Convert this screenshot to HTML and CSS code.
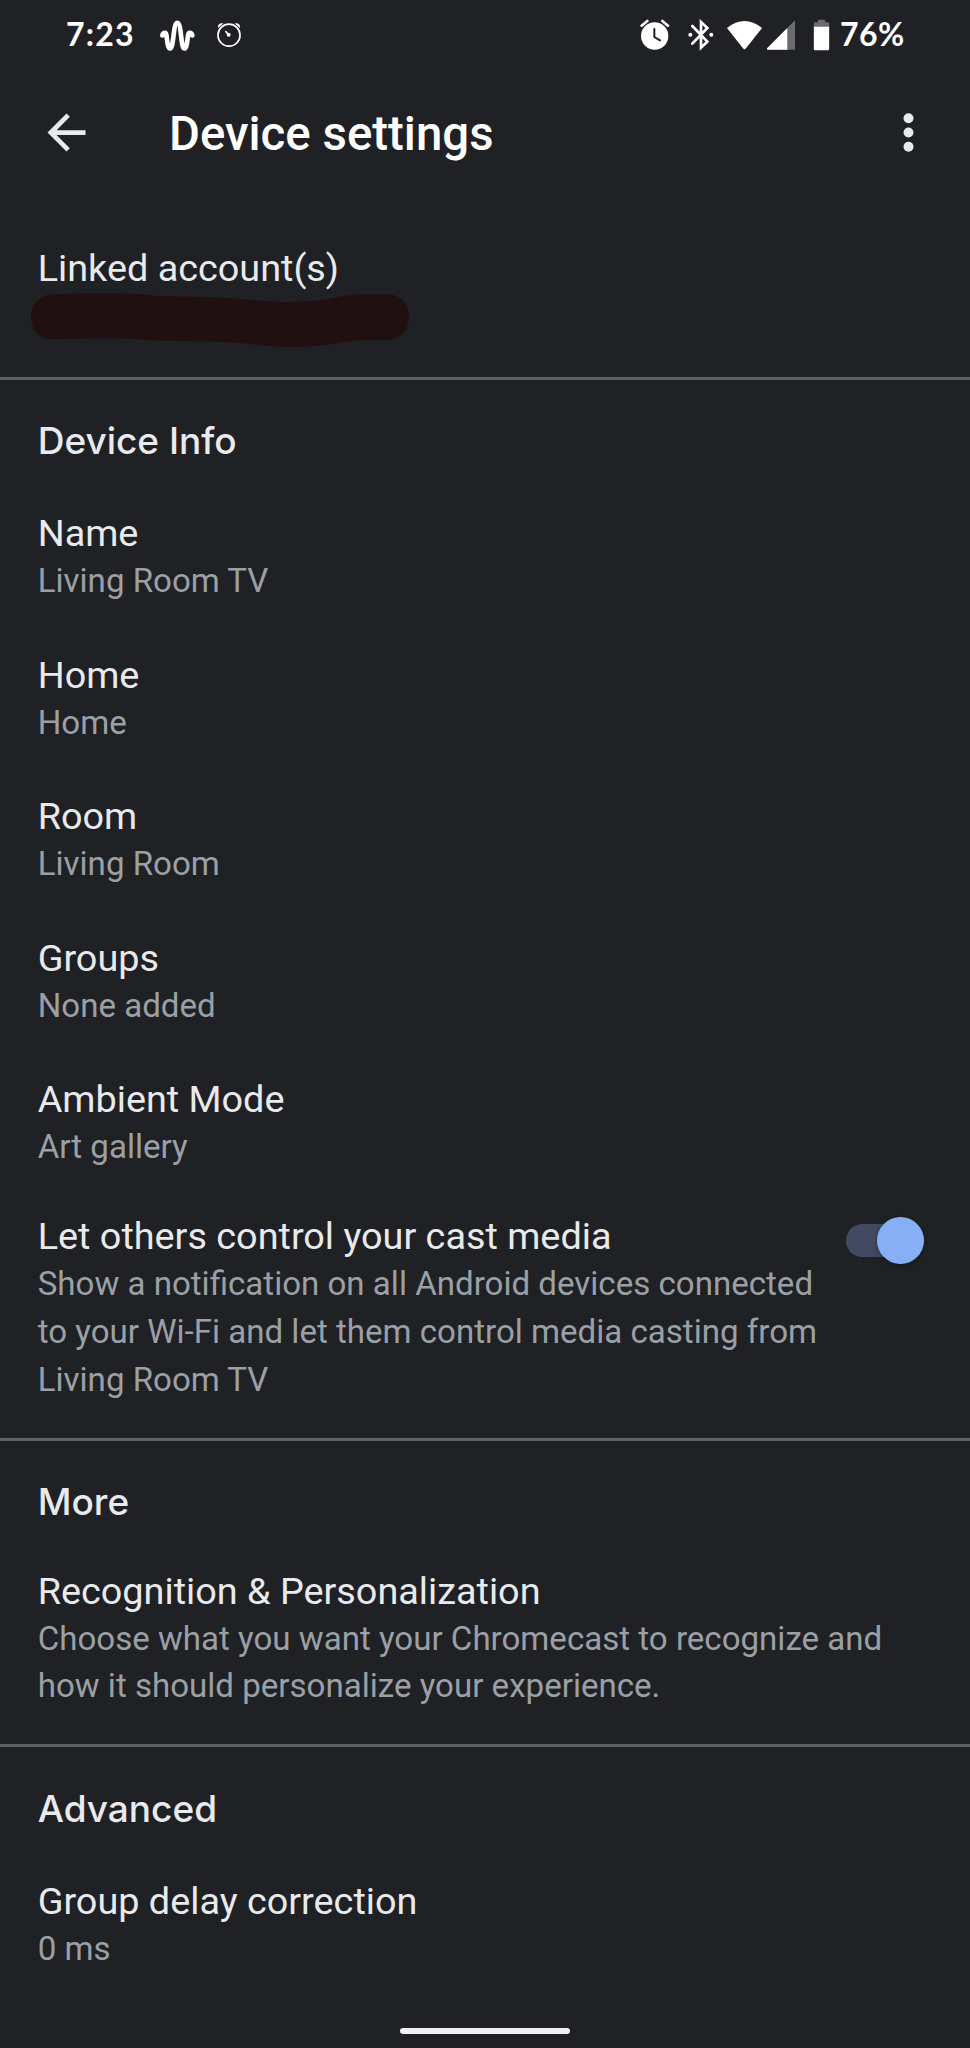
FILE: index.html
```html
<!DOCTYPE html>
<html lang="en">

<head>
  <meta charset="UTF-8">
  <meta name="viewport" content="width=device-width, initial-scale=1.0">
  <title>Device settings</title>
  <link rel="stylesheet" href="styles.css">
</head>

<body>
  <div class="status-bar">
    <span class="time">7:23</span>
    <svg class="icon-wave" viewBox="358 56 108 98">
      <path d="M368 105 Q369 97 377 97 C383 97 381 144 391 144 C403 144 400 67 413 67 C426 67 423 144 434 144 C445 144 442 97 449 97 Q457 97 458 105" fill="none" stroke="#fff" stroke-width="14" stroke-linecap="round" stroke-linejoin="round"/>
    </svg>
    <svg class="icon-timer" viewBox="527 62 78 82">
      <circle cx="566" cy="105" r="33.500" fill="none" stroke="#fff" stroke-width="5"/>
      <path d="M533 83 Q530 67 549 69 Z M599 83 Q602 67 583 69 Z" fill="#fff"/>
      <circle cx="565" cy="104" r="6" fill="#fff"/>
      <path d="M565 104 L556 94" stroke="#fff" stroke-width="5" stroke-linecap="round"/>
    </svg>
    <div class="spacer"></div>
    <svg class="icon-alarm" viewBox="60 56 90 96">
      <circle cx="104" cy="107" r="41" fill="#fff"/>
      <path d="M65 76 L82 62 M127 62 L144 76" stroke="#fff" stroke-width="8" stroke-linecap="round"/>
      <path d="M103 86 V110 L120 120" fill="none" stroke="#202124" stroke-width="6" stroke-linecap="round"/>
    </svg>
    <svg class="icon-bluetooth" viewBox="200 56 84 96">
      <path d="M216 77 L261 124 L242 142 V65 L261 83 L216 130" fill="none" stroke="#fff" stroke-width="8" stroke-linecap="round"/>
      <circle cx="210" cy="103" r="6" fill="#fff"/>
      <circle cx="273" cy="103" r="6" fill="#fff"/>
    </svg>
    <svg class="icon-wifi" viewBox="318 56 112 96">
      <path d="M321 83 Q374 41 427 83 L378 145 Q374 150 370 145 Z" fill="#fff"/>
    </svg>
    <svg class="icon-signal" viewBox="438 56 90 96">
      <path d="M525 60 V148 H443 Q439 146 442 143 Z" fill="#6a6b6d"/>
      <path d="M502 83 V148 H443 Q439 146 442 143 Z" fill="#fff"/>
    </svg>
    <svg class="icon-battery" viewBox="580 56 50 96">
      <path d="M582 80 V70 Q582 66 586 66 H594 V61 Q594 58 597 58 H613 Q616 58 616 61 V66 H624 Q628 66 628 70 V80 Z" fill="#6a6b6d"/>
      <path d="M582 79 H628 V146 Q628 150 624 150 H586 Q582 150 582 146 Z" fill="#fff"/>
    </svg>
    <span class="percent">76%</span>
  </div>

  <div class="app-bar">
    <svg class="icon" viewBox="0 0 24 24">
      <path d="M20 11H7.830l5.590-5.590L12 4l-8 8 8 8 1.410-1.410L7.830 13H20v-2z" fill="#e8eaed"/>
    </svg>
    <h1>Device settings</h1>
    <svg class="icon" viewBox="0 0 24 24">
      <g fill="#e8eaed">
        <circle cx="12" cy="6" r="2.100"/>
        <circle cx="12" cy="12" r="2.100"/>
        <circle cx="12" cy="18" r="2.100"/>
      </g>
    </svg>
  </div>

  <div class="section linked">
    <div class="title">Linked account(s)</div>
    <svg class="scribble" viewBox="90 183 1140 168">
      <path d="M150 191 C240 186 340 186 430 190 C480 200 600 194 690 202 C770 208 850 216 930 210 C990 208 1030 190 1090 190 H1165 C1205 192 1227 222 1227 256 C1227 294 1205 326 1160 327 H1080 C1020 334 970 347 880 348 C800 350 760 337 680 334 C600 328 500 332 430 326 C340 320 240 324 150 325 C118 324 93 294 93 258 C93 222 118 192 150 191 Z" fill="#211011"/>
    </svg>
  </div>

  <div class="section">
    <h2>Device Info</h2>
    <div class="row">
      <div class="title">Name</div>
      <div class="sub">Living Room TV</div>
    </div>
    <div class="row">
      <div class="title">Home</div>
      <div class="sub">Home</div>
    </div>
    <div class="row">
      <div class="title">Room</div>
      <div class="sub">Living Room</div>
    </div>
    <div class="row">
      <div class="title">Groups</div>
      <div class="sub">None added</div>
    </div>
    <div class="row">
      <div class="title">Ambient Mode</div>
      <div class="sub">Art gallery</div>
    </div>
    <div class="row long with-switch">
      <div>
        <div class="title">Let others control your cast media</div>
        <div class="sub">Show a notification on all Android devices connected<br>to your Wi-Fi and let them control media casting from<br>Living Room TV</div>
      </div>
      <div class="switch"><div class="thumb"></div></div>
    </div>
  </div>

  <div class="section">
    <h2>More</h2>
    <div class="row long">
      <div class="title">Recognition &amp; Personalization</div>
      <div class="sub">Choose what you want your Chromecast to recognize and<br>how it should personalize your experience.</div>
    </div>
  </div>

  <div class="section">
    <h2>Advanced</h2>
    <div class="row">
      <div class="title">Group delay correction</div>
      <div class="sub">0 ms</div>
    </div>
  </div>

  <div class="nav-handle"></div>
</body>

</html>
```

FILE: styles.css
```css
* {
  box-sizing: border-box;
}

body {
  margin: 0;
  height: 2048px;
  display: flex;
  flex-direction: column;
  overflow: hidden;
  background-color: #202124;
  color: #e8eaed;
  font-family: Roboto, sans-serif;
}

svg {
  display: block;
  flex: none;
}

/* Status bar */
.status-bar {
  display: flex;
  align-items: center;
  height: 68px;
  padding: 2px 66px 0 66px;
  color: #fff;
  font-family: Lato, sans-serif;
  font-size: 32px;
  font-weight: 700;
  line-height: 40px;
}

.time {
  width: 93px;
  padding-bottom: 2px;
  letter-spacing: 1.2px;
}

.percent {
  width: 64px;
  padding-bottom: 2px;
  letter-spacing: 0.5px;
  white-space: nowrap;
}

.spacer {
  flex: 1;
}

.icon-wave {
  width: 36px;
  height: 33px;
}

.icon-timer {
  width: 26px;
  height: 27px;
  margin: 0 0 2px 21px;
}

.icon-alarm {
  width: 30px;
  height: 32px;
}

.icon-bluetooth {
  width: 28px;
  height: 32px;
  margin-left: 17px;
}

.icon-wifi {
  width: 37px;
  height: 32px;
  margin-left: 11px;
}

.icon-signal {
  width: 30px;
  height: 32px;
  margin-left: 3px;
}

.icon-battery {
  width: 17px;
  height: 32px;
  margin: 0 10px 0 17px;
}

/* App bar */
.app-bar {
  display: flex;
  align-items: center;
  height: 128px;
  padding: 0 33px 0 38px;
}

.app-bar .icon {
  width: 57px;
  height: 57px;
}

.app-bar h1 {
  flex: 1;
  margin: 0;
  padding: 3px 0 0 74px;
  color: #fff;
  font-size: 47.4px;
  font-weight: 500;
}

/* Settings list */
.section {
  padding: 38.2px 37.7px 0;
}

.section + .section {
  border-top: 3px solid #5f6064;
}

.linked {
  height: 181px;
  padding-top: 48.5px;
}

.scribble {
  width: 380px;
  height: 56px;
  margin-left: -7.7px;
}

h2 {
  margin: 0 0 22.9px;
  font-family: Inter, sans-serif;
  font-size: 37px;
  font-weight: 500;
  line-height: 46px;
}

.row {
  padding: 23.4px 0;
}

.long {
  padding: 19.5px 0 34.7px;
}

.title {
  font-size: 37.8px;
  line-height: 47px;
}

.sub {
  color: #9aa0a6;
  font-size: 33.1px;
  line-height: 47.6px;
  white-space: nowrap;
}

.with-switch {
  display: flex;
  justify-content: space-between;
}

.switch {
  display: flex;
  justify-content: flex-end;
  align-items: center;
  width: 78px;
  height: 33px;
  margin: 11px 8.3px 0 0;
  border-radius: 17px;
  background-color: #414a61;
}

.thumb {
  width: 47px;
  height: 47px;
  border-radius: 50%;
  background-color: #87aff5;
  box-shadow: 0 2px 5px rgba(0, 0, 0, 0.3);
}

/* Gesture handle */
.nav-handle {
  width: 170px;
  height: 6px;
  margin: auto auto 14px;
  border-radius: 3px;
  background-color: #f1f1f4;
}
```
